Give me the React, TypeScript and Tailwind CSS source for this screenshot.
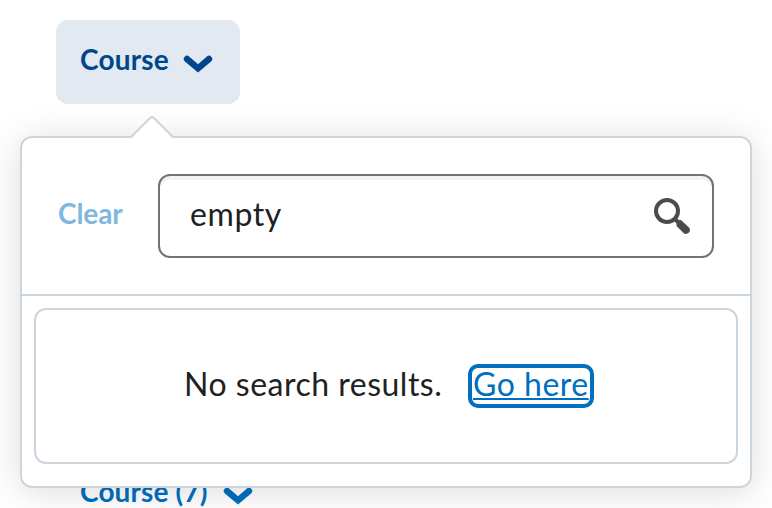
const Chevron = ({ className = '' }: { className?: string }) => (
  <svg className={className} width="30" height="18" viewBox="0 0 30 18" fill="none" stroke="currentColor" strokeWidth="6.4" strokeLinecap="round" strokeLinejoin="miter">
    <path d="M4 4 L15 13.4 L26 4" />
  </svg>
);

export default function App() {
  return (
    <div className="relative h-[508px] w-[772px] overflow-hidden bg-white pt-5 font-['Lato',sans-serif] text-[#202122]">
      <button className="ml-14 flex h-[84px] w-[184px] items-center rounded-[12px] bg-[#e2e9f1] pl-6 text-[28px] font-bold leading-[42px] tracking-[0.2px] text-[#00468c]">
        <span className="block w-[103px] pb-1.5 text-left">Course</span>
        <Chevron className="mt-1" />
      </button>

      <div className="ml-20 mt-[366px] flex text-[28px] font-bold leading-[42px] tracking-[0.15px] text-[#006fbf]">
        <span className="block w-[143px]">Course (7)</span>
        <Chevron className="mt-[17px]" />
      </div>

      <section className="absolute left-5 top-[136px] h-[352px] w-[732px] rounded-[12px] border-2 border-[#cdd5dc] bg-white shadow-[0_4px_36px_rgba(0,0,0,0.14)]">
        <svg className="absolute left-[108px] top-[-24px] overflow-visible" width="46" height="26" viewBox="0 0 46 26" fill="none">
          <path d="M1 25 L20.5 4.5 Q22 3 23.5 4.5 L43 25Z" fill="white" />
          <path d="M0 23 H1 L20.3 3.8 Q22 2.2 23.7 3.8 L43 23 H45" stroke="#cdd5dc" strokeWidth="2" />
        </svg>

        <div className="flex h-[158px] items-center border-b-2 border-[#cdd5dc] pl-9 pr-9">
          <span className="w-[100px] pb-1.5 text-[28px] font-bold leading-[42px] tracking-[-0.1px] text-[#80b7df]">Clear</span>
          <div className="flex h-[84px] flex-1 items-center justify-between rounded-[12px] border-2 border-[#6e7376] pl-[30px] pr-5 shadow-[inset_0_4px_0_#f1f2f4]">
            <span className="pb-1 text-[32px] leading-[48px] tracking-[0.6px]">empty</span>
            <svg width="40" height="40" viewBox="0 0 40 40" fill="none" stroke="#494c4e">
              <circle cx="15" cy="15" r="11" strokeWidth="4" />
              <path d="M22 22 L27 27" strokeWidth="4" />
              <path d="M24.5 26 L25.5 24.5 L29 24 L37 31.5 Q39 34 37 36.5 Q34 39 31.5 37 L24.5 30Z" fill="#494c4e" stroke="none" />
            </svg>
          </div>
        </div>

        <div className="mx-3 mt-3 flex h-[156px] items-start rounded-[12px] border-2 border-[#cdd5dc] pl-[148px] pt-[50px] text-[32px] leading-[48px] tracking-[0.5px]">
          <span className="w-[284px] whitespace-nowrap">No search results.</span>
          <a className="mt-1 h-11 rounded-[10px] border-4 border-[#006fbf] px-px leading-[32px] text-[#006fbf] underline decoration-2 underline-offset-2">Go here</a>
        </div>
      </section>
    </div>
  );
}
